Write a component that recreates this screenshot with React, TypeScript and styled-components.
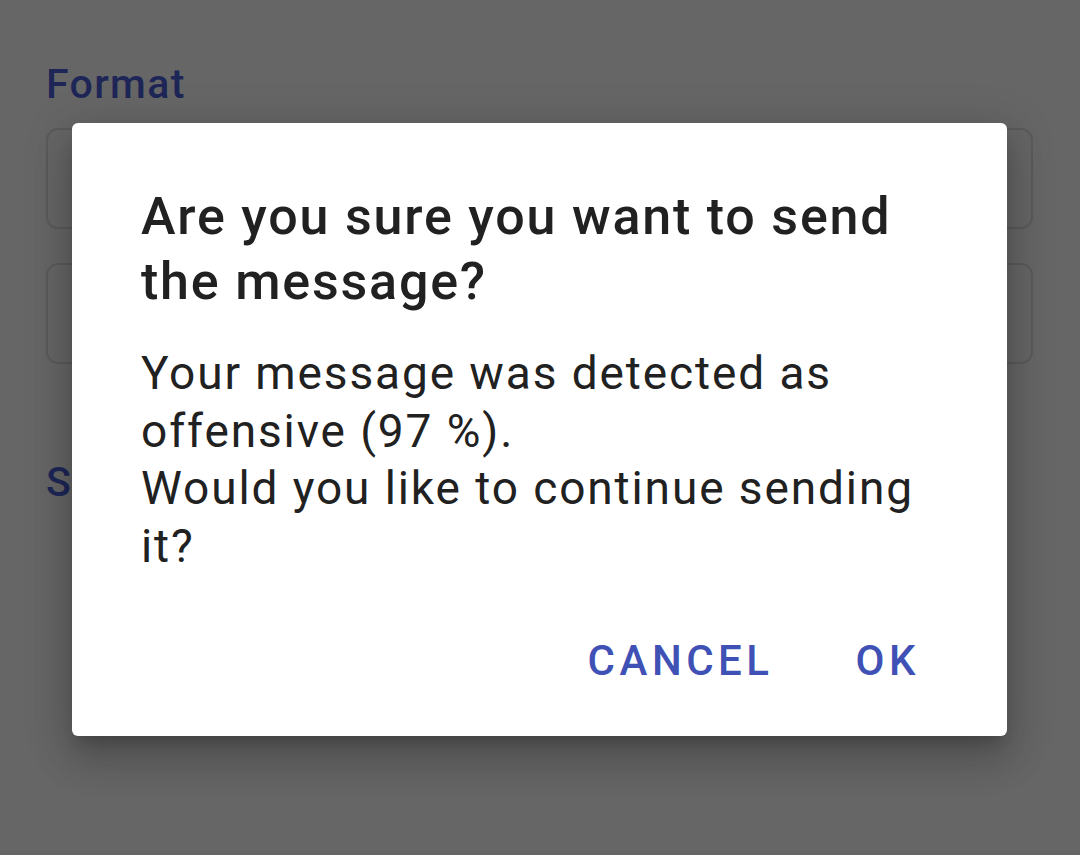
import React from "react";
import styled, { createGlobalStyle } from "styled-components";

const Global = createGlobalStyle`
  html, body { margin: 0; padding: 0; }
  body {
    width: 1080px;
    height: 855px;
    overflow: hidden;
    background: #666666;
    font-family: Roboto, "Noto Sans", Arial, sans-serif;
  }
`;

const Page = styled.div`
  position: relative;
  width: 1080px;
  height: 855px;
  box-sizing: border-box;
  padding: 60px 47px 0 46px;
  display: flex;
  flex-direction: column;
`;

const Label = styled.div<{ $mt?: number }>`
  font-family: Roboto, sans-serif;
  font-weight: 500;
  font-size: 41px;
  line-height: 48px;
  letter-spacing: 1.4px;
  color: #1e2657;
  margin-top: ${(p) => p.$mt ?? 0}px;
`;

const Field = styled.div<{ $mt: number }>`
  height: 101px;
  box-sizing: border-box;
  border: 2px solid #5b5b5b;
  border-radius: 12px;
  margin-top: ${(p) => p.$mt}px;
`;

const Dialog = styled.div`
  position: absolute;
  left: 72px;
  top: 123px;
  width: 935px;
  height: 613px;
  box-sizing: border-box;
  background: #ffffff;
  border-radius: 6px;
  box-shadow: 0 11px 15px -7px rgba(0, 0, 0, 0.2),
    0 24px 38px 3px rgba(0, 0, 0, 0.14), 0 9px 46px 8px rgba(0, 0, 0, 0.12);
  padding: 61px 60px 0 69px;
  display: flex;
  flex-direction: column;
`;

const Title = styled.h2`
  margin: 0;
  font-family: Roboto, sans-serif;
  font-weight: 500;
  font-size: 52px;
  line-height: 65px;
  letter-spacing: 1.8px;
  color: #212121;
`;

const Body = styled.p`
  margin: 31px 0 0;
  font-family: Roboto, sans-serif;
  font-weight: 400;
  font-size: 46px;
  line-height: 57.7px;
  letter-spacing: 1.9px;
  color: #212121;
`;

const Actions = styled.div`
  margin-top: 60px;
  margin-right: 27px;
  display: flex;
  justify-content: flex-end;
  gap: 82px;
`;

const Action = styled.button`
  border: none;
  background: none;
  padding: 0;
  font-family: Roboto, sans-serif;
  font-weight: 500;
  font-size: 42px;
  line-height: 50px;
  letter-spacing: 4.5px;
  color: #3f51b5;
  text-transform: uppercase;
`;

export default function App() {
  return (
    <>
      <Global />
      <Page>
        <Label>Format</Label>
        <Field $mt={20} />
        <Field $mt={34} />
        <Label $mt={94}>S</Label>
        <Dialog>
          <Title>
            Are you sure you want to send
            <br />
            the message?
          </Title>
          <Body>
            Your message was detected as
            <br />
            offensive (97 %).
            <br />
            Would you like to continue sending
            <br />
            it?
          </Body>
          <Actions>
            <Action>Cancel</Action>
            <Action>OK</Action>
          </Actions>
        </Dialog>
      </Page>
    </>
  );
}
